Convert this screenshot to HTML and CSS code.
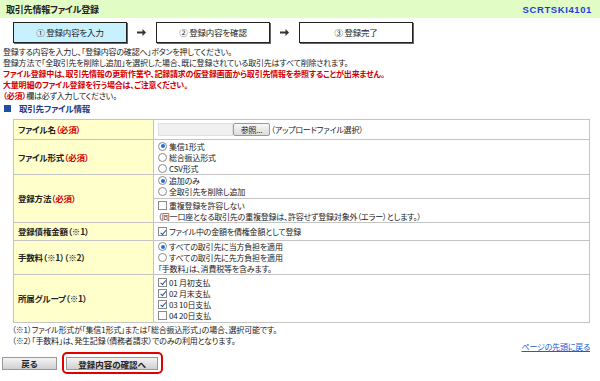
FILE: index.html
```html
<!DOCTYPE html>
<html lang="ja">
<head>
  <meta charset="UTF-8" />
  <title>取引先情報ファイル登録</title>
  <link rel="stylesheet" href="styles.css">
</head>
<body>
  <div class="titlebar">
    <span class="title">取引先情報ファイル登録</span>
    <span class="screen-id">SCRTSKI4101</span>
  </div>

  <div class="steps">
    <div class="step current">① 登録内容を入力</div>
    <div class="arrow"><svg width="9" height="7" viewBox="0 0 9 7"><path d="M0 2.5h5.5V0L9 3.5 5.5 7V4.5H0z" fill="#333"/></svg></div>
    <div class="step">② 登録内容を確認</div>
    <div class="arrow"><svg width="9" height="7" viewBox="0 0 9 7"><path d="M0 2.5h5.5V0L9 3.5 5.5 7V4.5H0z" fill="#333"/></svg></div>
    <div class="step">③ 登録完了</div>
  </div>

  <div class="notes">
    <p>登録する内容を入力し、「登録内容の確認へ」ボタンを押してください。</p>
    <p>登録方法で「全取引先を削除し追加」を選択した場合、既に登録されている取引先はすべて削除されます。</p>
    <p class="warn">ファイル登録中は、取引先情報の更新作業や、記録請求の仮登録画面から取引先情報を参照することが出来ません。</p>
    <p class="warn">大量明細のファイル登録を行う場合は、ご注意ください。</p>
    <p><span class="req">（必須）</span>欄は必ず入力してください。</p>
  </div>

  <h2 class="section">取引先ファイル情報</h2>

  <table class="form">
    <tr class="r1">
      <th>ファイル名<span class="req">（必須）</span></th>
      <td>
        <div class="file">
          <span class="file-box"></span>
          <span class="file-btn">参照...</span>
          <span>（アップロードファイル選択）</span>
        </div>
      </td>
    </tr>
    <tr class="r2">
      <th>ファイル形式<span class="req">（必須）</span></th>
      <td>
        <div class="opt"><span class="radio on"></span>集信1形式</div>
        <div class="opt"><span class="radio"></span>総合振込形式</div>
        <div class="opt"><span class="radio"></span>CSV形式</div>
      </td>
    </tr>
    <tr class="r3">
      <th>登録方法<span class="req">（必須）</span></th>
      <td>
        <div class="part">
          <div class="opt"><span class="radio on"></span>追加のみ</div>
          <div class="opt"><span class="radio"></span>全取引先を削除し追加</div>
        </div>
        <div class="part sep">
          <div class="opt"><span class="check"></span>重複登録を許容しない</div>
          <div class="opt">（同一口座となる取引先の重複登録は、許容せず登録対象外（エラー）とします。）</div>
        </div>
      </td>
    </tr>
    <tr class="r4">
      <th>登録債権金額（※1）</th>
      <td><div class="opt"><span class="check on"></span>ファイル中の金額を債権金額として登録</div></td>
    </tr>
    <tr class="r5">
      <th>手数料（※1）（※2）</th>
      <td>
        <div class="opt"><span class="radio on"></span>すべての取引先に当方負担を適用</div>
        <div class="opt"><span class="radio"></span>すべての取引先に先方負担を適用</div>
        <div class="opt">「手数料」は、消費税等を含みます。</div>
      </td>
    </tr>
    <tr class="r6">
      <th>所属グループ（※1）</th>
      <td>
        <div class="opt"><span class="check on"></span>01 月初支払</div>
        <div class="opt"><span class="check on"></span>02 月末支払</div>
        <div class="opt"><span class="check on"></span>03 10日支払</div>
        <div class="opt"><span class="check"></span>04 20日支払</div>
      </td>
    </tr>
  </table>

  <div class="footnotes">
    <p>（※1）ファイル形式が「集信1形式」または「総合振込形式」の場合、選択可能です。</p>
    <p>（※2）「手数料」は、発生記録（債務者請求）でのみの利用となります。</p>
  </div>

  <div class="pagetop"><a href="#">ページの先頭に戻る</a></div>

  <div class="buttons">
    <button class="btn back">戻る</button>
    <span class="focus"><button class="btn next">登録内容の確認へ</button></span>
  </div>
</body>
</html>
```

FILE: styles.css
```css
* {
  margin: 0;
  padding: 0;
  box-sizing: border-box;
}
body {
  font-family: "Noto Sans CJK JP", "DejaVu Sans", sans-serif;
  font-size: 8px;
  letter-spacing: -0.2px;
  font-feature-settings: "palt";
  line-height: 11px;
  color: #222;
  background: #fff;
  width: 600px;
}
.titlebar {
  display: flex;
  justify-content: space-between;
  align-items: center;
  height: 18px;
  padding: 0 8px 0 6px;
  background: #e2fcc6;
}
.title {
  font-weight: bold;
  font-size: 9px;
}
.screen-id {
  color: #1a3fe0;
  font-weight: bold;
  font-family: "Liberation Sans", sans-serif;
  font-size: 9.5px;
  letter-spacing: 0.6px;
}
.steps {
  display: flex;
  align-items: center;
  padding: 4px 0 0 13px;
}
.step {
  width: 114px;
  height: 21px;
  border: 1px solid #222;
  box-shadow: 1px 1px 0 #666;
  display: flex;
  align-items: center;
  justify-content: center;
  background: #fff;
  font-size: 8.5px;
}
.step.current {
  background: #c8f1ff;
}
.arrow {
  width: 29px;
  display: flex;
  justify-content: center;
}
.notes {
  padding: 3px 0 0 3px;
}
.warn {
  color: #d40000;
  font-weight: bold;
}
.req {
  color: #d40000;
  font-weight: bold;
}
.section {
  font-size: 8.5px;
  color: #1c3d86;
  font-weight: bold;
  margin: 2px 0 0 4px;
  display: flex;
  align-items: center;
}
.section::before {
  content: "";
  width: 7px;
  height: 7px;
  background: #1f4f9f;
  margin-right: 8px;
}
.form {
  border-collapse: collapse;
  width: 577px;
  margin: 5px 0 0 13px;
}
.form th,
.form td {
  border: 1px solid #c4c4c4;
  text-align: left;
  vertical-align: middle;
  padding: 0 4px;
}
.form th {
  width: 140px;
  background: #ffffcc;
  font-weight: bold;
  font-size: 8.5px;
}
.r1 { height: 20px; }
.r2 { height: 35px; }
.r3 { height: 48px; }
.r4 { height: 18px; }
.r5 { height: 34px; }
.r6 { height: 48px; }
.r3 td {
  padding: 0;
}
.part {
  padding: 0 4px 1px;
}
.part.sep {
  border-top: 1px solid #c4c4c4;
  padding: 1px 4px 0;
}
.opt {
  display: flex;
  align-items: center;
  height: 11px;
  white-space: nowrap;
}
.radio,
.check {
  width: 9px;
  height: 9px;
  margin-right: 2px;
  flex: none;
  border: 1px solid #8a8a8a;
  background: #fff;
  position: relative;
}
.radio {
  border-radius: 50%;
}
.radio.on::after {
  content: "";
  position: absolute;
  left: 1.5px;
  top: 1.5px;
  width: 4px;
  height: 4px;
  border-radius: 50%;
  background: #1e6fd6;
}
.check.on::after {
  content: "";
  position: absolute;
  left: 2.5px;
  top: 0.5px;
  width: 2px;
  height: 4.5px;
  border: solid #1d4fa8;
  border-width: 0 1.5px 1.5px 0;
  transform: rotate(40deg);
}
.file {
  display: flex;
  align-items: center;
}
.file-box {
  width: 75px;
  height: 13px;
  background: #f0f0f0;
  border: 1px solid #e0e0e0;
}
.file-btn {
  height: 13px;
  width: 37px;
  border: 1px solid #9a9a9a;
  border-radius: 2px;
  background: linear-gradient(#f7f7f7, #dcdcdc);
  display: flex;
  align-items: center;
  justify-content: center;
  margin-right: 1px;
}
.footnotes {
  padding: 1px 0 0 12px;
}
.pagetop {
  text-align: right;
  padding-right: 10px;
  margin-top: -5px;
}
.pagetop a {
  color: #2458d8;
}
.buttons {
  display: flex;
  align-items: center;
  padding: 0 0 0 2px;
  gap: 5px;
}
.btn {
  font-family: inherit;
  font-size: 8.5px;
  font-weight: bold;
  font-feature-settings: "palt";
  color: #222;
  height: 13px;
  border: 1px solid #999;
  background: linear-gradient(#f4f4f4, #d0d0d0);
  display: flex;
  align-items: center;
  justify-content: center;
}
.btn.back {
  width: 55px;
}
.focus {
  border: 2px solid #e50000;
  border-radius: 5px;
  padding: 3px 3px 2px 2px;
}
.btn.next {
  width: 92px;
}
```
